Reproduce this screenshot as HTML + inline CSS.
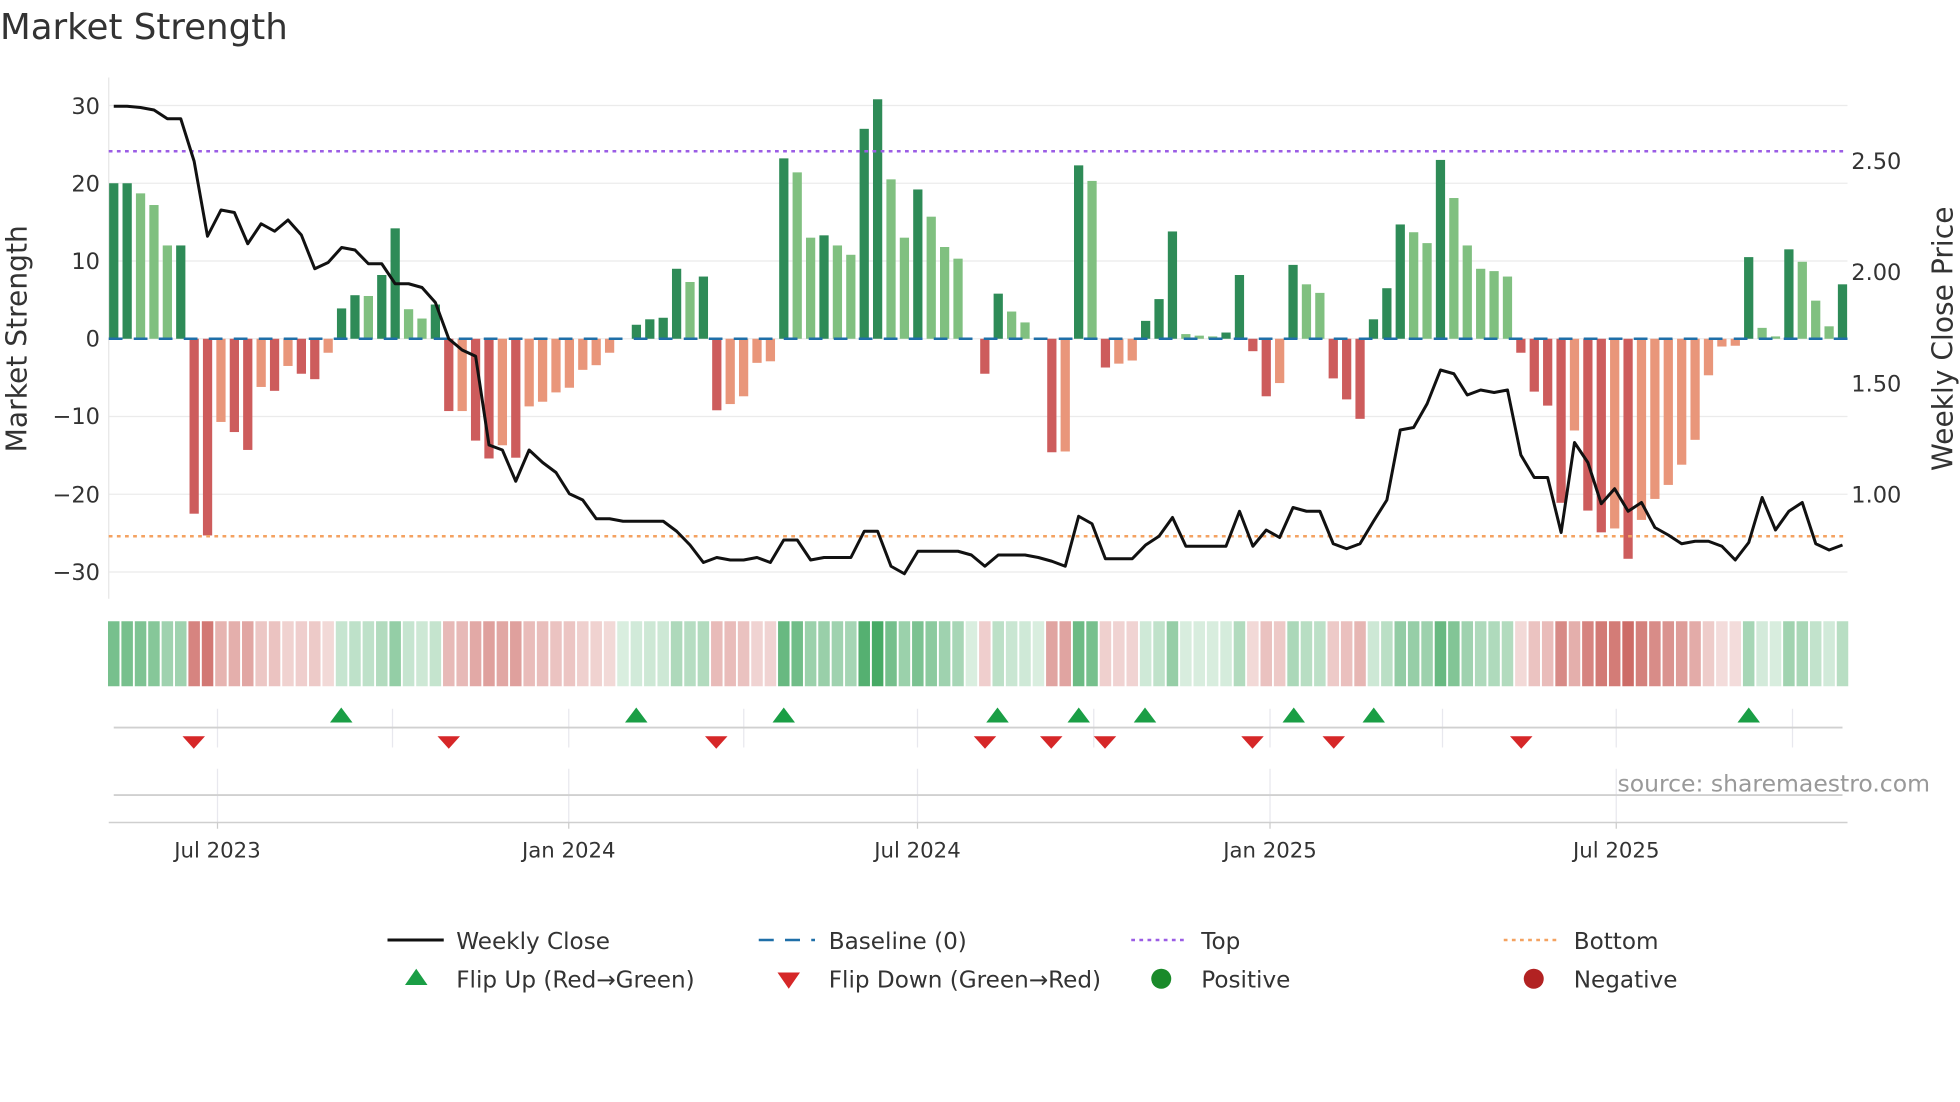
<!DOCTYPE html>
<html><head><meta charset="utf-8">
<style>
html,body{margin:0;padding:0;background:#fff;}
svg{display:block;font-family:"DejaVu Sans","Liberation Sans",sans-serif;}
</style></head>
<body>
<svg id="s" xmlns="http://www.w3.org/2000/svg" width="1960" height="1102" viewBox="0 0 1568 881.6">
<rect width="1568" height="882" fill="#fff"/>
<text x="0" y="31" font-size="28.5" fill="#333">Market Strength</text>
<g id="grid" stroke="#ebebeb" stroke-width="1"></g>
<line x1="87" y1="62" x2="87" y2="479" stroke="#e6e6e6"/>
<g id="bars"></g>
<line x1="87" y1="121" x2="1478" y2="121" stroke="#9b5de5" stroke-width="2" stroke-dasharray="3 3.5"/>
<line x1="87" y1="429" x2="1478" y2="429" stroke="#f4a261" stroke-width="2" stroke-dasharray="3 3.5"/>
<line x1="87" y1="271" x2="1478" y2="271" stroke="#1f6fa8" stroke-width="2" stroke-dasharray="11 9"/>
<polyline id="price" fill="none" stroke="#111" stroke-width="2.4" stroke-linejoin="round"/>
<g font-size="18" fill="#333" text-anchor="end">
<text x="80" y="91">30</text><text x="80" y="153">20</text><text x="80" y="215">10</text><text x="80" y="277">0</text>
<text x="80" y="339">−10</text><text x="80" y="402">−20</text><text x="80" y="464">−30</text>
</g>
<g font-size="18" fill="#333">
<text x="1481" y="135">2.50</text><text x="1481" y="224">2.00</text><text x="1481" y="313">1.50</text><text x="1481" y="402">1.00</text>
</g>
<text transform="translate(21,271) rotate(-90)" text-anchor="middle" font-size="22.5" fill="#333">Market Strength</text>
<text transform="translate(1562,271) rotate(-90)" text-anchor="middle" font-size="22.5" fill="#333">Weekly Close Price</text>
<g id="heat"></g>
<g stroke="#e8e8ee" stroke-width="1">
<line x1="174" y1="567" x2="174" y2="598"/><line x1="314" y1="567" x2="314" y2="598"/><line x1="455" y1="567" x2="455" y2="598"/><line x1="595" y1="567" x2="595" y2="598"/><line x1="734" y1="567" x2="734" y2="598"/><line x1="875" y1="567" x2="875" y2="598"/><line x1="1016" y1="567" x2="1016" y2="598"/><line x1="1154" y1="567" x2="1154" y2="598"/><line x1="1293" y1="567" x2="1293" y2="598"/><line x1="1434" y1="567" x2="1434" y2="598"/>
<line x1="174" y1="615" x2="174" y2="658"/><line x1="455" y1="615" x2="455" y2="658"/><line x1="734" y1="615" x2="734" y2="658"/><line x1="1016" y1="615" x2="1016" y2="658"/><line x1="1293" y1="615" x2="1293" y2="658"/>
</g>
<line x1="91" y1="582" x2="1474" y2="582" stroke="#d0d0d0" stroke-width="1.5"/>
<line x1="91" y1="636" x2="1474" y2="636" stroke="#d0d0d0" stroke-width="1.5"/>
<line x1="87" y1="658" x2="1478" y2="658" stroke="#cfcfcf" stroke-width="1.2"/>
<g id="marks"></g>
<text x="1544" y="633" text-anchor="end" font-size="18.8" fill="#999">source: sharemaestro.com</text>
<g font-size="17" fill="#333" text-anchor="middle">
<text x="174" y="686">Jul 2023</text><text x="455" y="686">Jan 2024</text><text x="734" y="686">Jul 2024</text><text x="1016" y="686">Jan 2025</text><text x="1293" y="686">Jul 2025</text>
</g>
<g stroke="#ccc"><line x1="174" y1="658" x2="174" y2="663"/><line x1="455" y1="658" x2="455" y2="663"/><line x1="734" y1="658" x2="734" y2="663"/><line x1="1016" y1="658" x2="1016" y2="663"/><line x1="1293" y1="658" x2="1293" y2="663"/></g>
<g font-size="18.5" fill="#333">
<line x1="310" y1="752" x2="355" y2="752" stroke="#111" stroke-width="2.4"/><text x="365" y="759">Weekly Close</text>
<line x1="607" y1="752" x2="652" y2="752" stroke="#1f6fa8" stroke-width="2" stroke-dasharray="12 9"/><text x="663" y="759">Baseline (0)</text>
<line x1="905" y1="752" x2="950" y2="752" stroke="#9b5de5" stroke-width="2" stroke-dasharray="3 3.5"/><text x="961" y="759">Top</text>
<line x1="1203" y1="752" x2="1248" y2="752" stroke="#f4a261" stroke-width="2" stroke-dasharray="3 3.5"/><text x="1259" y="759">Bottom</text>
<polygon points="324,788 342,788 333,775" fill="#1a9e45"/><text x="365" y="790">Flip Up (Red→Green)</text>
<polygon points="622,778 640,778 631,791" fill="#d62728"/><text x="663" y="790">Flip Down (Green→Red)</text>
<circle cx="929" cy="783" r="8" fill="#1a8a2a"/><text x="961" y="790">Positive</text>
<circle cx="1227" cy="783" r="8" fill="#b22222"/><text x="1259" y="790">Negative</text>
</g>
</svg>
<script>
var NS="http://www.w3.org/2000/svg";
function el(p,t,a){var e=document.createElementNS(NS,t);for(var k in a)e.setAttribute(k,a[k]);p.appendChild(e);return e;}
var B=[[20,1],[20,1],[18.7,0],[17.2,0],[12,0],[12,1],[-22.5,1],[-25.3,1],[-10.7,0],[-12,1],[-14.3,1],[-6.2,0],[-6.7,1],[-3.5,0],[-4.5,1],[-5.2,1],[-1.8,0],[3.9,1],[5.6,1],[5.5,0],[8.2,1],[14.2,1],[3.8,0],[2.6,0],[4.4,1],[-9.3,1],[-9.3,0],[-13.1,1],[-15.4,1],[-13.7,0],[-15.3,1],[-8.7,0],[-8.1,0],[-6.9,0],[-6.3,0],[-4,0],[-3.4,0],[-1.8,0],[0,0],[1.8,1],[2.5,1],[2.7,1],[9,1],[7.3,0],[8,1],[-9.2,1],[-8.4,0],[-7.4,0],[-3.1,0],[-2.9,0],[23.2,1],[21.4,0],[13,0],[13.3,1],[12,0],[10.8,0],[27,1],[30.8,1],[20.5,0],[13,0],[19.2,1],[15.7,0],[11.8,0],[10.3,0],[0,0],[-4.5,1],[5.8,1],[3.5,0],[2.1,0],[0,0],[-14.6,1],[-14.5,0],[22.3,1],[20.3,0],[-3.7,1],[-3.2,0],[-2.8,0],[2.3,1],[5.1,1],[13.8,1],[.6,0],[.4,0],[.3,0],[.8,1],[8.2,1],[-1.6,1],[-7.4,1],[-5.7,0],[9.5,1],[7,0],[5.9,0],[-5.1,1],[-7.8,1],[-10.3,1],[2.5,1],[6.5,1],[14.7,1],[13.7,0],[12.3,0],[23,1],[18.1,0],[12,0],[9,0],[8.7,0],[8,0],[-1.8,1],[-6.8,1],[-8.6,1],[-21.1,1],[-11.8,0],[-22.1,1],[-24.9,1],[-24.4,0],[-28.3,1],[-23.3,0],[-20.6,0],[-18.8,0],[-16.2,0],[-13,0],[-4.7,0],[-1,0],[-0.9,0],[10.5,1],[1.4,0],[.3,0],[11.5,1],[9.9,0],[4.9,0],[1.6,0],[7,1]];
var P=[85,85,86,88,95,95,129,189,168,170,195,179,185,176,188,215,210,198,200,211,211,227,227,230,242,271,280,285,356,360,385,360,370,378,395,400,415,415,417,417,417,417,425,436,450,446,448,448,446,450,432,432,448,446,446,446,425,425,453,459,441,441,441,441,444,453,444,444,444,446,449,453,413,419,447,447,447,436,429,414,437,437,437,437,409,437,424,430,406,409,409,435,439,435,417,400,344,342,323,296,299,316,312,314,312,364,382,382,426,354,370,403,391,409,402,422,428,435,433,433,437,448,434,398,424,409,402,435,440,436];
var sp=(1474-91)/129, Y0=271, U=6.22;
var g=document.getElementById("grid");
[30,20,10,0,-10,-20,-30].forEach(function(v){var y=Y0-v*U;el(g,"line",{x1:87,x2:1478,y1:y,y2:y});});
var bars=document.getElementById("bars"),heat=document.getElementById("heat");
B.forEach(function(b,i){var x=91+i*sp,v=b[0];
 if(v!=0){var h=Math.abs(v)*U,y=v>0?Y0-h:Y0;
  var c=v>0?(b[1]?"#2e8b57":"#80c080"):(b[1]?"#cd5c5c":"#e9967a");
  el(bars,"rect",{x:x-3.7,y:y,width:7.4,height:h,fill:c});}
 var a=0.18+0.7*Math.min(Math.abs(v),30)/30;
 el(heat,"rect",{x:x-4.6,y:497,width:9.2,height:52,fill:v>=0?"#2e9e50":"#c4504a","fill-opacity":a.toFixed(2)});
});
document.getElementById("price").setAttribute("points",P.map(function(y,i){return (91+i*sp).toFixed(1)+","+y;}).join(" "));
var m=document.getElementById("marks");
[273,509,627,798,863,916,1035,1099,1399].forEach(function(x){el(m,"polygon",{points:(x-9)+",578 "+(x+9)+",578 "+x+",566",fill:"#1a9e45"});});
[155,359,573,788,841,884,1002,1067,1217].forEach(function(x){el(m,"polygon",{points:(x-9)+",589 "+(x+9)+",589 "+x+",599",fill:"#d62728"});});
</script>
</body></html>
